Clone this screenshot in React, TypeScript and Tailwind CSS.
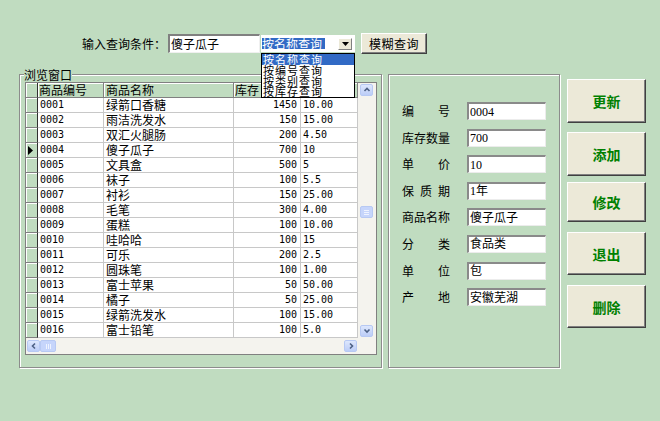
import React from "react";

const rows: [string, string, string, string][] = [
  ["0001", "绿箭口香糖", "1450", "10.00"],
  ["0002", "雨洁洗发水", "150", "15.00"],
  ["0003", "双汇火腿肠", "200", "4.50"],
  ["0004", "傻子瓜子", "700", "10"],
  ["0005", "文具盒", "500", "5"],
  ["0006", "袜子", "100", "5.5"],
  ["0007", "衬衫", "150", "25.00"],
  ["0008", "毛笔", "300", "4.00"],
  ["0009", "蛋糕", "100", "10.00"],
  ["0010", "哇哈哈", "100", "15"],
  ["0011", "可乐", "200", "2.5"],
  ["0012", "圆珠笔", "100", "1.00"],
  ["0013", "富士苹果", "50", "50.00"],
  ["0014", "橘子", "50", "25.00"],
  ["0015", "绿箭洗发水", "100", "15.00"],
  ["0016", "富士铅笔", "100", "5.0"],
];

const fields: [string[], string][] = [
  [["编", "号"], "0004"],
  [["库", "存", "数", "量"], "700"],
  [["单", "价"], "10"],
  [["保", "质", "期"], "1年"],
  [["商", "品", "名", "称"], "傻子瓜子"],
  [["分", "类"], "食品类"],
  [["单", "位"], "包"],
  [["产", "地"], "安徽芜湖"],
];

function Arrow({ dir }: { dir: "up" | "down" | "left" | "right" }) {
  const d =
    dir === "up"
      ? "M1.5 5 L4 2.5 L6.5 5"
      : dir === "down"
      ? "M1.5 2.5 L4 5 L6.5 2.5"
      : dir === "left"
      ? "M5 1.5 L2.5 4 L5 6.5"
      : "M3 1.5 L5.5 4 L3 6.5";
  return (
    <div className="w-[13px] h-[12px] rounded-[2px] border border-[#b7c9f3] bg-[linear-gradient(180deg,#dde7fd,#bccdf7)] flex items-center justify-center">
      <svg width="8" height="8" viewBox="0 0 8 8">
        <path d={d} stroke="#4d6185" strokeWidth="1.6" fill="none" />
      </svg>
    </div>
  );
}

const mono = "font-['DejaVu_Sans_Mono',monospace] text-[10px]";

export default function App() {
  return (
    <div className="w-[660px] h-[421px] bg-[#c0dcc0] relative overflow-hidden font-['Noto_Sans_CJK_SC',sans-serif] text-[12px] text-black leading-none">
      {/* top query bar */}
      <div className="flex items-center h-[21px] mt-[33px] pl-[82px]">
        <div className="w-[86px] whitespace-nowrap">输入查询条件：</div>
        <div className="w-[92px] h-[19px] bg-white border-t-2 border-l-2 border-t-[#808080] border-l-[#808080] border-b border-r border-b-[#f0f0f0] border-r-[#f0f0f0] flex items-center pl-[1px]">
          傻子瓜子
        </div>
        <div className="relative ml-[1px] w-[94px] h-[17px] bg-white flex items-center">
          <span className="ml-[1px] bg-[#316ac5] text-white leading-[11px] h-[11px] pr-[3px] whitespace-nowrap">
            按名称查询
          </span>
          <div className="ml-auto mr-[3px] w-[14px] h-[12px] bg-[#ece9d8] border border-t-white border-l-white border-b-[#808080] border-r-[#808080] flex items-center justify-center">
            <svg width="7" height="4" viewBox="0 0 7 4">
              <path d="M0 0 L7 0 L3.5 4 Z" fill="#000" />
            </svg>
          </div>
          <div className="absolute left-0 top-[18px] w-[94px] h-[45px] bg-white border border-black flex flex-col z-10 text-[11px] tracking-[1px]">
            <div className="bg-[#316ac5] text-white h-[10.75px] leading-[10.75px] pl-[1px] whitespace-nowrap">按名称查询</div>
            <div className="h-[10.75px] leading-[10.75px] pl-[1px] whitespace-nowrap">按编号查询</div>
            <div className="h-[10.75px] leading-[10.75px] pl-[1px] whitespace-nowrap">按类别查询</div>
            <div className="h-[10.75px] leading-[10.75px] pl-[1px] whitespace-nowrap">按库存查询</div>
          </div>
        </div>
        <button className="ml-[6px] w-[66px] h-[21px] bg-[#ece9d8] border border-t-white border-l-white border-b-[#404040] border-r-[#404040] shadow-[inset_-1px_-1px_0_#808080] flex items-center justify-center tracking-[0.5px]">
          模糊查询
        </button>
      </div>

      {/* main area */}
      <div className="flex mt-[20px] pl-[19px]">
        {/* group box */}
        <div className="relative w-[363px] h-[294px] border border-[#8c8c8c] shadow-[inset_1px_1px_0_#fff,1px_1px_0_#fff] pl-[5px] pt-[7px]">
          <div className="absolute left-[4px] top-[-7px] bg-[#c0dcc0] leading-[13px] whitespace-nowrap">浏览窗口</div>
          <div className="w-[352px] h-[273px] border border-[#808080] bg-white flex flex-col">
            <div className="flex h-[255px]">
              <div className="w-[332px] flex flex-col">
                {/* header */}
                <div className="flex h-[15px]">
                  <div className="w-[12px] h-[15px] bg-[#c0dcc0] border-r border-r-[#303030] border-b border-b-[#808080] shadow-[inset_1px_1px_0_#fff]" />
                  <div className="w-[66px] h-[15px] bg-[#c0dcc0] border-r border-b border-[#808080] shadow-[inset_1px_1px_0_#fff] pl-[1px] leading-[14px]">商品编号</div>
                  <div className="w-[130px] h-[15px] bg-[#c0dcc0] border-r border-b border-[#808080] shadow-[inset_1px_1px_0_#fff] pl-[2px] leading-[14px]">商品名称</div>
                  <div className="w-[67px] h-[15px] bg-[#c0dcc0] border-r border-b border-[#808080] shadow-[inset_1px_1px_0_#fff] pl-[1px] leading-[14px]">库存</div>
                  <div className="w-[57px] h-[15px] bg-[#c0dcc0] border-r border-b border-[#808080] shadow-[inset_1px_1px_0_#fff]" />
                </div>
                {rows.map((r) => (
                  <div key={r[0]} className="flex h-[15px]">
                    <div className="w-[12px] h-[15px] bg-[#c0dcc0] border-r border-r-[#303030] border-b border-b-[#808080] shadow-[inset_1px_1px_0_#fff] flex items-center pl-[2px]">
                      {r[0] === "0004" && (
                        <svg width="5" height="9" viewBox="0 0 5 9">
                          <path d="M0 0 L5 4.5 L0 9 Z" fill="#000" />
                        </svg>
                      )}
                    </div>
                    <div className={`w-[66px] h-[15px] border-r border-b border-[#c8c8c8] pl-[2px] flex items-center ${mono}`}>{r[0]}</div>
                    <div className="w-[130px] h-[15px] border-r border-b border-[#c8c8c8] pl-[2px] leading-[14px] whitespace-nowrap">{r[1]}</div>
                    <div className={`w-[67px] h-[15px] border-r border-b border-[#c8c8c8] pr-[3px] flex items-center justify-end ${mono}`}>{r[2]}</div>
                    <div className={`w-[57px] h-[15px] border-r border-b border-[#c8c8c8] pl-[2px] flex items-center ${mono}`}>{r[3]}</div>
                  </div>
                ))}
              </div>
              {/* vertical scrollbar */}
              <div className="w-[18px] h-[255px] bg-[#f4f3ee] flex flex-col pl-[2px]">
                <div className="mt-[1px]">
                  <Arrow dir="up" />
                </div>
                <div className="mt-[110px] w-[13px] h-[12px] rounded-[2px] border border-[#b7c9f3] bg-[#c6d5fb] flex flex-col items-center justify-center gap-[1px]">
                  <div className="w-[5px] h-[1px] bg-[#eef3ff]" />
                  <div className="w-[5px] h-[1px] bg-[#eef3ff]" />
                  <div className="w-[5px] h-[1px] bg-[#eef3ff]" />
                </div>
                <div className="flex-1" />
                <div className="mb-[1px]">
                  <Arrow dir="down" />
                </div>
              </div>
            </div>
            {/* horizontal scrollbar */}
            <div className="flex h-[16px]">
              <div className="w-[332px] h-[16px] bg-[#f4f3ee] flex items-center">
                <div className="ml-[1px]">
                  <Arrow dir="left" />
                </div>
                <div className="w-[16px] h-[12px] rounded-[2px] border border-[#b7c9f3] bg-[#c6d5fb] flex items-center justify-center gap-[1px]">
                  <div className="w-[1px] h-[5px] bg-[#eef3ff]" />
                  <div className="w-[1px] h-[5px] bg-[#eef3ff]" />
                  <div className="w-[1px] h-[5px] bg-[#eef3ff]" />
                </div>
                <div className="flex-1" />
                <div className="mr-[1px]">
                  <Arrow dir="right" />
                </div>
              </div>
              <div className="w-[18px] h-[16px] bg-[#f4f3ee]" />
            </div>
          </div>
        </div>

        {/* detail panel */}
        <div className="ml-[6px] w-[172px] h-[294px] border border-[#8c8c8c] shadow-[inset_1px_1px_0_#fff,1px_1px_0_#fff] pl-[13px] pt-[27px] flex flex-col gap-[8.6px]">
          {fields.map(([chars, val]) => (
            <div key={chars.join("")} className="flex items-center h-[18px]">
              <div className="w-[48px] flex justify-between">
                {chars.map((c, i) => (
                  <span key={i}>{c}</span>
                ))}
              </div>
              <div className="ml-[17px] w-[79px] h-[18px] bg-white border-t-2 border-l-2 border-t-[#8a8a8a] border-l-[#8a8a8a] border-b border-r border-b-[#ececec] border-r-[#ececec] flex items-center pl-[1px] font-['Liberation_Serif','Noto_Sans_CJK_SC',serif] text-[12px] whitespace-nowrap">
                {val}
              </div>
            </div>
          ))}
        </div>

        {/* buttons */}
        <div className="ml-[7px] mt-[5px] w-[79px] flex flex-col">
          <button className="h-[44px] bg-[#ece9d8] border border-t-white border-l-white border-b-[#404040] border-r-[#404040] shadow-[inset_-1px_-1px_0_#808080] text-[#008000] font-bold text-[14px] flex items-center justify-center">更新</button>
          <button className="mt-[9px] h-[44px] bg-[#ece9d8] border border-t-white border-l-white border-b-[#404040] border-r-[#404040] shadow-[inset_-1px_-1px_0_#808080] text-[#008000] font-bold text-[14px] flex items-center justify-center">添加</button>
          <button className="mt-[6px] h-[40px] bg-[#ece9d8] border border-t-white border-l-white border-b-[#404040] border-r-[#404040] shadow-[inset_-1px_-1px_0_#808080] text-[#008000] font-bold text-[14px] flex items-center justify-center">修改</button>
          <button className="mt-[10px] h-[43px] bg-[#ece9d8] border border-t-white border-l-white border-b-[#404040] border-r-[#404040] shadow-[inset_-1px_-1px_0_#808080] text-[#008000] font-bold text-[14px] flex items-center justify-center">退出</button>
          <button className="mt-[10px] h-[43px] bg-[#ece9d8] border border-t-white border-l-white border-b-[#404040] border-r-[#404040] shadow-[inset_-1px_-1px_0_#808080] text-[#008000] font-bold text-[14px] flex items-center justify-center">删除</button>
        </div>
      </div>
    </div>
  );
}
